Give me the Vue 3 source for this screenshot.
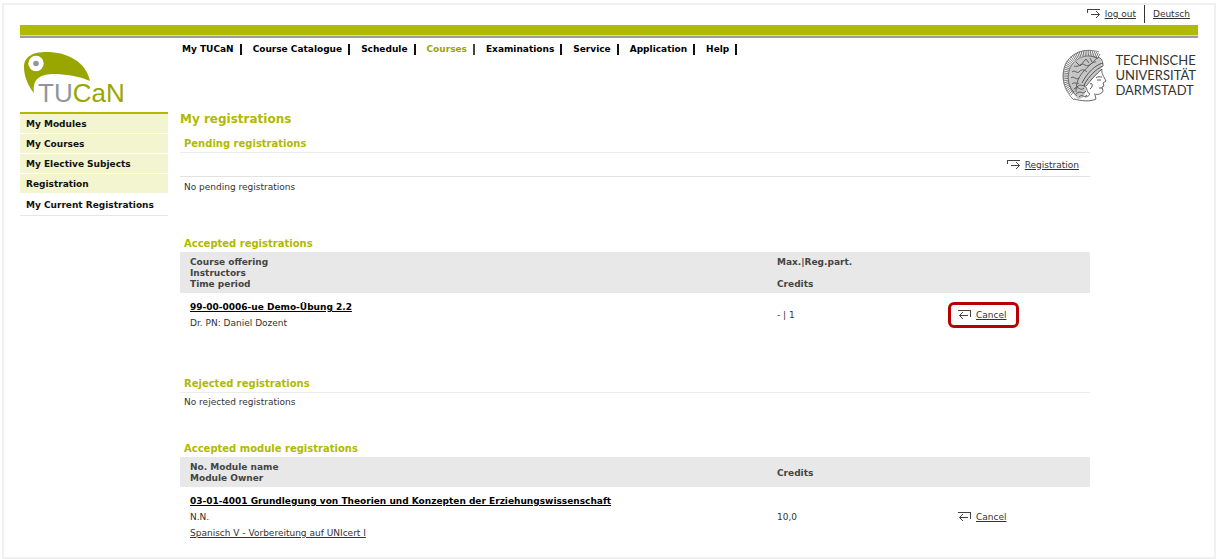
<script setup>
const nav = ['My TUCaN', 'Course Catalogue', 'Schedule', 'Courses', 'Examinations', 'Service', 'Application', 'Help']
const menu = ['My Modules', 'My Courses', 'My Elective Subjects', 'Registration', 'My Current Registrations']

// Radial bristles of the helmet crest, from the brow round to the neck
const bristles = Array.from({ length: 38 }, (_, i) => {
  const a = ((-58 - i * 4.6) * Math.PI) / 180
  const p = (rx, ry) => `${(25 + rx * Math.cos(a)).toFixed(1)} ${(27 + ry * Math.sin(a)).toFixed(1)}`
  return `M${p(19, 20)}L${p(24.5, 26)}`
}).join('')
</script>

<template>
  <div class="frame">
    <div class="tools">
      <a href="#" class="action">
        <svg class="arrow" viewBox="0 0 14 10" aria-hidden="true"><path d="M0 .5H13M.5 0V4M4 5.500H12.500M9 2L12.500 5.500L9 9" /></svg>
        <span>log out</span>
      </a>
      <a href="#" class="lang">Deutsch</a>
    </div>
    <div class="stripe"></div>

    <header class="header">
      <a href="#" class="logo" aria-label="TUCaN">
        <svg viewBox="0 0 104 56" aria-hidden="true">
          <path fill="#9aa600" d="M10 41C4 34 0 24 0 15C0 4 10 0 22 0C44 0 62 10 66 29C56 24.500 44 22.500 31 22C17 22 8 26 10 41Z" />
          <circle cx="12" cy="11.500" r="7.700" fill="#fff" />
          <circle cx="12" cy="11.500" r="2.800" fill="#8e979e" />
          <text x="14" y="50" font-size="26" fill="#8e979e">TU<tspan fill="#9aa600">CaN</tspan></text>
        </svg>
      </a>
      <nav class="nav">
        <a v-for="item in nav" :key="item" href="#" :class="{ active: item === 'Courses' }">{{ item }}</a>
      </nav>
      <div class="brand">
        <svg class="athena" viewBox="0 0 46 54" fill="none" stroke="#555" aria-hidden="true">
          <path fill="#c6c6c6" stroke="none" d="M36 8C24 4 12 9 7 20C4 31 7 42 16 50C22 50 24 44 24 38L39 20C41 15 39 10 36 8Z" />
          <path stroke-width=".8" :d="bristles" />
          <path stroke-width=".7" d="M37 3C26-1 11 2 4 14C-1 25 0 40 12 51M35 9C24 4 13 9 8 19C4 30 7 40 15 47" />
          <path fill="#fff" stroke="none" d="M40 20C39 24 42 28 44 32L41 34L42 37L40 38L41 42C40 45 36 46 33 45L33 50C29 52 23 51 20 50C25 45 25 40 24 36C28 32 34 26 40 20Z" />
          <path stroke-width=".9" d="M40 20C39 24 42 28 44 32L41 34L42 37L40 38L41 42C40 45 36 46 32 45M33 46L34 50C28 53 19 52 12 50" />
          <path stroke-width="1" d="M41 14C33 16 25 24 20 34M41 17C34 20 27 27 22 36M40 20C34 25 29 31 24 37M36 8C39 9 41 12 41 17" />
          <path stroke-width=".9" d="M35 9C31 14 24 18 18 27C15 32 14 37 14 43M12 17C17 19 19 13 23 16C27 19 30 12 34 13M10 23C13 20 15 26 18 22C20 20 23 21 25 23M9 29C12 26 14 32 17 29M10 35C13 32 15 36 17 34M14 13L18 17L24 10L27 14M28 9L30 13" />
          <path stroke-width="1" d="M12 40C17 36 18 43 22 39M14 45C19 40 20 47 24 42M17 48C21 44 21 50 25 46M15 38C19 34 20 38 23 36M22 37C26 38 24 43 27 44C29 46 25 48 23 48" />
          <path stroke-width="1" d="M34 29C36 27 38 28 40 28M35 31L39 31M37 39H40M28 35C31 33 31 38 28 40" />
        </svg>
        <div class="brand-text">TECHNISCHE<br />UNIVERSITÄT<br />DARMSTADT</div>
      </div>
    </header>

    <div class="body">
      <aside class="sidebar">
        <a v-for="item in menu" :key="item" href="#" :class="{ current: item === 'My Current Registrations' }">{{ item }}</a>
      </aside>

      <main class="main">
        <h1>My registrations</h1>

        <section class="pending">
          <h2>Pending registrations</h2>
          <div class="bar">
            <a href="#" class="action">
              <svg class="arrow" viewBox="0 0 14 10" aria-hidden="true"><path d="M0 .5H13M.5 0V4M4 5.500H12.500M9 2L12.500 5.500L9 9" /></svg>
              <span>Registration</span>
            </a>
          </div>
          <p>No pending registrations</p>
        </section>

        <section class="accepted">
          <h2>Accepted registrations</h2>
          <table>
            <colgroup><col /><col class="c2" /><col class="c3" /></colgroup>
            <thead>
              <tr>
                <th scope="col">Course offering<br />Instructors<br />Time period</th>
                <th scope="col">Max.|Reg.part.<br /><br />Credits</th>
                <td></td>
              </tr>
            </thead>
            <tbody>
              <tr>
                <td><a href="#" class="title">99-00-0006-ue Demo-Übung 2.2</a><br />Dr. PN: Daniel Dozent</td>
                <td>- | 1</td>
                <td class="cancel-cell">
                  <a href="#" class="action cancel marked">
                    <svg class="arrow" viewBox="0 0 14 10" aria-hidden="true"><path d="M0 .5H13M12.500 0V7M1.500 5.500H10M5 2L1.500 5.500L5 9" /></svg>
                    <span>Cancel</span>
                  </a>
                </td>
              </tr>
            </tbody>
          </table>
        </section>

        <section class="rejected">
          <h2>Rejected registrations</h2>
          <p>No rejected registrations</p>
        </section>

        <section>
          <h2>Accepted module registrations</h2>
          <table>
            <colgroup><col /><col class="c2" /><col class="c3" /></colgroup>
            <thead>
              <tr>
                <th scope="col">No. Module name<br />Module Owner</th>
                <th scope="col">Credits</th>
                <td></td>
              </tr>
            </thead>
            <tbody>
              <tr>
                <td>
                  <a href="#" class="title">03-01-4001 Grundlegung von Theorien und Konzepten der Erziehungswissenschaft</a><br />N.N.<br /><a href="#">Spanisch V - Vorbereitung auf UNIcert I</a>
                </td>
                <td>10,0</td>
                <td class="cancel-cell">
                  <a href="#" class="action cancel">
                    <svg class="arrow" viewBox="0 0 14 10" aria-hidden="true"><path d="M0 .5H13M12.500 0V7M1.500 5.500H10M5 2L1.500 5.500L5 9" /></svg>
                    <span>Cancel</span>
                  </a>
                </td>
              </tr>
            </tbody>
          </table>
        </section>
      </main>
    </div>
  </div>
</template>

<style>
body {
  background: #fff;
}
</style>

<style scoped>
.frame {
  box-sizing: border-box;
  margin: 3px 1px 1px 2px;
  padding: 0 16px 10px;
  border: 2px solid #f0f0f0;
  font: 9px/16px "DejaVu Sans", Verdana, sans-serif;
  color: #333;
}
a {
  color: inherit;
  text-underline-offset: 1px;
}
h1,
h2,
p {
  margin: 0;
}
.tools {
  display: flex;
  justify-content: flex-end;
  height: 20px;
  padding-right: 8px;
}
.action {
  display: inline-flex;
  align-items: center;
  gap: 4px;
  text-decoration: none;
}
.action span {
  text-decoration: underline;
}
.arrow {
  width: 14px;
  height: 10px;
  fill: none;
  stroke: #444;
  stroke-width: 1;
}
.tools .action {
  height: 18px;
  padding-right: 8px;
  border-right: 1px solid #333;
}
.lang {
  padding-left: 8px;
  line-height: 18px;
}
.stripe {
  height: 11px;
  background: #afba00;
  border-bottom: 2px solid #9c9c9c;
  box-shadow: inset 0 -1px #d8dda0;
}
.header {
  display: flex;
  height: 74px;
}
.logo {
  width: 148px;
  padding: 14px 0 0 4px;
  box-sizing: border-box;
}
.logo svg {
  display: block;
  width: 104px;
  height: 56px;
  font-family: "Liberation Sans", Arial, sans-serif;
}
.nav {
  flex: 1;
  display: flex;
  align-items: flex-start;
  padding: 6px 0 0 14px;
}
.nav a {
  margin-right: 11px;
  padding-right: 6px;
  border-right: 2px solid #111;
  line-height: 11px;
  font-weight: bold;
  color: #000;
  text-decoration: none;
}
.nav a.active {
  color: #9aa600;
  border-color: #444;
}
.brand {
  display: flex;
  gap: 7px;
  padding: 11px 2px 0 0;
}
.athena {
  width: 46px;
  height: 54px;
}
.brand-text {
  padding-top: 4px;
  font: 13px/15px Lato, "Open Sans", sans-serif;
  color: #333;
}
.body {
  display: flex;
  gap: 12px;
}
.sidebar {
  width: 148px;
  flex: none;
  border-top: 2px solid #afba00;
  align-self: flex-start;
  box-sizing: border-box;
}
.sidebar a {
  display: block;
  padding: 2px 0 0 6px;
  line-height: 17px;
  border-bottom: 1px solid #fff;
  background: #f3f4d0;
  font-weight: bold;
  color: #111;
  text-decoration: none;
}
.sidebar a.current {
  background: #fff;
  border-bottom-color: #e6e6e6;
  line-height: 19px;
}
.main {
  flex: 1;
  padding-right: 108px;
}
h1 {
  font-size: 12px;
  line-height: 14px;
  color: #afba00;
}
h2 {
  padding: 0 4px;
  font-size: 10px;
  line-height: 17px;
  color: #afba00;
}
p {
  padding: 2px 4px;
}
.pending {
  margin: 9px 0 38px;
}
.bar {
  display: flex;
  justify-content: flex-end;
  padding: 3px 11px 3px 0;
  height: 17px;
  border-top: 1px solid #ececec;
  border-bottom: 1px solid #e2e2e2;
}
.accepted {
  margin-bottom: 38px;
}
.rejected {
  margin-bottom: 28px;
}
.rejected p {
  padding-top: 1px;
  border-top: 1px solid #ececec;
}
table {
  width: 100%;
  table-layout: fixed;
  border-collapse: collapse;
}
.c2 {
  width: 171px;
}
.c3 {
  width: 142px;
}
th,
td {
  padding: 6px 0;
  text-align: left;
}
th:first-child,
td:first-child {
  padding-left: 10px;
}
thead {
  background: #e8e8e8;
}
th {
  padding: 5px 0 3px;
  line-height: 11px;
  color: #444;
}
.title {
  font-weight: bold;
  color: #000;
}
.cancel-cell {
  padding: 0;
}
.cancel {
  padding: 2px 9px 2px 7px;
  border: 3px solid transparent;
}
.marked {
  border-color: #b80000;
  border-radius: 6px;
}
</style>
